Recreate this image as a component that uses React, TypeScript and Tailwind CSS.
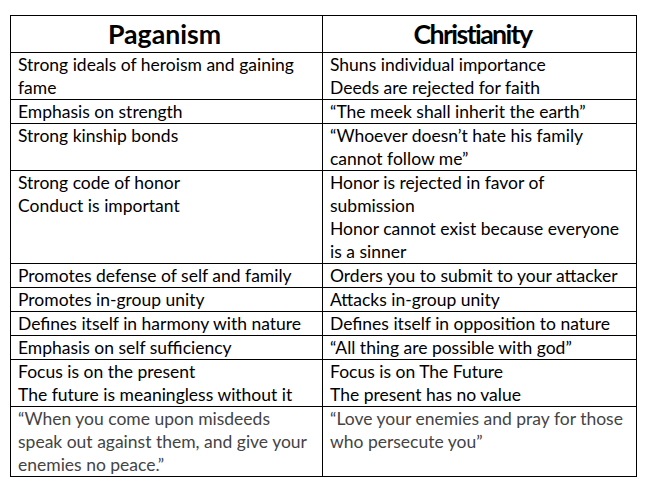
type Row = {
  pagan: string[];
  christian: string[];
  muted?: boolean;
};

const rows: Row[] = [
  {
    pagan: ["Strong ideals of heroism and gaining", "fame"],
    christian: ["Shuns individual importance", "Deeds are rejected for faith"],
  },
  { pagan: ["Emphasis on strength"], christian: ["\u201CThe meek shall inherit the earth\u201D"] },
  {
    pagan: ["Strong kinship bonds"],
    christian: ["\u201CWhoever doesn\u2019t hate his family", "cannot follow me\u201D"],
  },
  {
    pagan: ["Strong code of honor", "Conduct is important"],
    christian: [
      "Honor is rejected in favor of",
      "submission",
      "Honor cannot exist because everyone",
      "is a sinner",
    ],
  },
  { pagan: ["Promotes defense of self and family"], christian: ["Orders you to submit to your attacker"] },
  { pagan: ["Promotes in-group unity"], christian: ["Attacks in-group unity"] },
  { pagan: ["Defines itself in harmony with nature"], christian: ["Defines itself in opposition to nature"] },
  { pagan: ["Emphasis on self sufficiency"], christian: ["\u201CAll thing are possible with god\u201D"] },
  {
    pagan: ["Focus is on the present", "The future is meaningless without it"],
    christian: ["Focus is on The Future", "The present has no value"],
  },
  {
    pagan: [
      "\u201CWhen you come upon misdeeds",
      "speak out against them, and give your",
      "enemies no peace.\u201D",
    ],
    christian: ["\u201CLove your enemies and pray for those", "who persecute you\u201D"],
    muted: true,
  },
];

function Cell({ lines, muted }: { lines: string[]; muted?: boolean }) {
  return (
    <td
      className={`border border-black px-[7px] py-0 align-top text-[17.5px] leading-[23px] ${
        muted ? "text-[#444444]" : "text-black"
      }`}
    >
      {lines.map((line, i) => (
        <div key={i} className="whitespace-nowrap">
          {line}
        </div>
      ))}
    </td>
  );
}

export default function App() {
  return (
    <div
      className="w-[645px] h-[495px] bg-white pt-[15px] pl-[10px]"
      style={{ fontFamily: "Lato, 'Open Sans', sans-serif" }}
    >
      <table className="border-collapse table-fixed w-[626px]">
        <colgroup>
          <col className="w-[312px]" />
          <col className="w-[314px]" />
        </colgroup>
        <thead>
          <tr>
            <th className="border border-black text-center font-bold text-[26.7px] leading-[36px] text-black pr-[4px]">
              Paganism
            </th>
            <th className="border border-black text-center font-bold text-[26.7px] leading-[36px] text-black tracking-[-1.6px] pr-[14px]">
              Christianity
            </th>
          </tr>
        </thead>
        <tbody>
          {rows.map((row, i) => (
            <tr key={i}>
              <Cell lines={row.pagan} muted={row.muted} />
              <Cell lines={row.christian} muted={row.muted} />
            </tr>
          ))}
        </tbody>
      </table>
    </div>
  );
}
